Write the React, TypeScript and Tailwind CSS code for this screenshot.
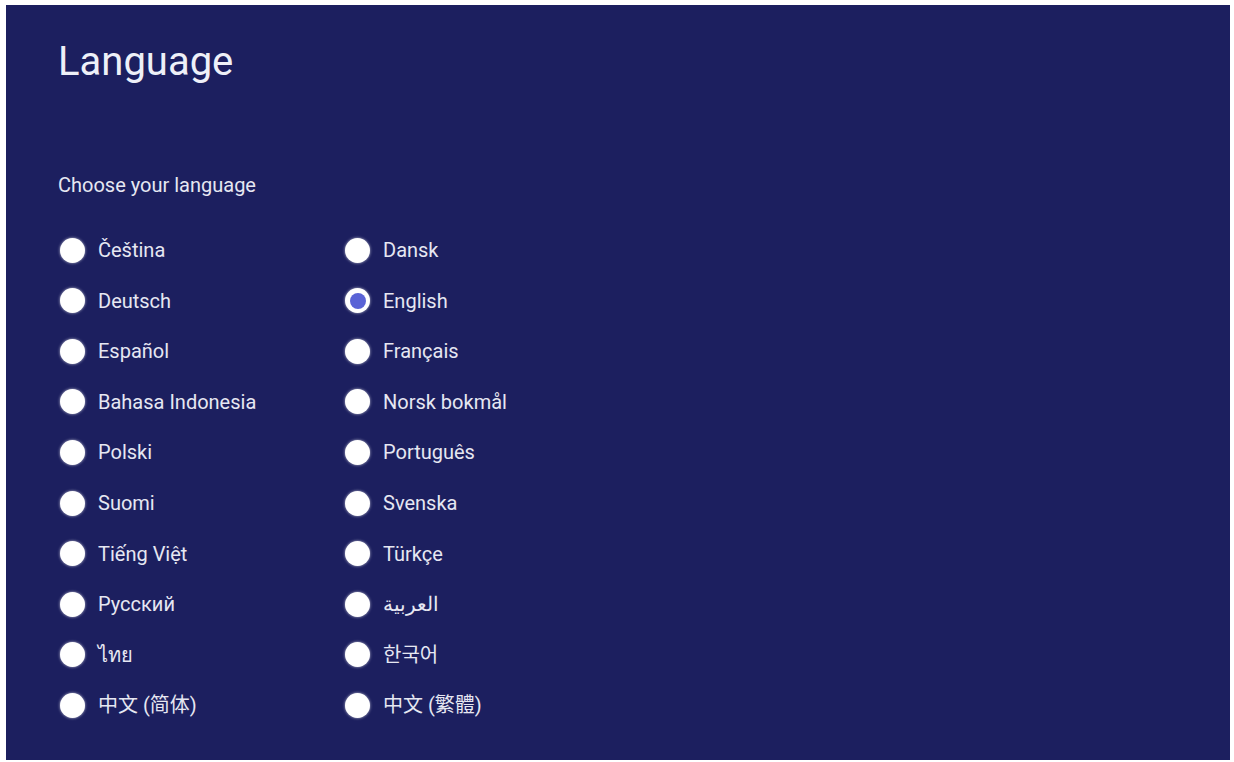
import React from "react";

const left = ["Čeština", "Deutsch", "Español", "Bahasa Indonesia", "Polski", "Suomi", "Tiếng Việt", "Русский", "ไทย", "中文 (简体)"];
const right = ["Dansk", "English", "Français", "Norsk bokmål", "Português", "Svenska", "Türkçe", "العربية", "한국어", "中文 (繁體)"];

function Radio({ selected }: { selected?: boolean }) {
  if (selected) {
    return (
      <div className="w-[25px] h-[25px] rounded-full bg-white flex items-center justify-center shadow-[0_0_3px_rgba(255,255,255,0.7)] shrink-0">
        <div className="w-[16px] h-[16px] rounded-full bg-[#5a63d6]" />
      </div>
    );
  }
  return <div className="w-[25px] h-[25px] rounded-full bg-white shadow-[0_0_3px_rgba(255,255,255,0.7)] shrink-0" />;
}

function Item({ label, selected }: { label: string; selected?: boolean }) {
  return (
    <div className="h-[50.56px] flex items-center">
      <Radio selected={selected} />
      <span className="ml-[13px] text-[20px] leading-none text-[#e6e7f2]">{label}</span>
    </div>
  );
}

export default function App() {
  return (
    <div
      className="w-[1234px] h-[762px] bg-white pl-[6px] pt-[5px]"
      style={{ fontFamily: 'Roboto, "Noto Sans", "Noto Sans CJK SC", "Noto Sans CJK KR", sans-serif' }}
    >
      <div className="w-[1224px] h-[755px] bg-[#1c1f5f] pl-[52px] pt-[37px]">
        <div className="text-[40px] leading-none text-[#eef0f8]">Language</div>
        <div className="mt-[93px] text-[20px] leading-none text-[#e6e7f2]">Choose your language</div>
        <div className="mt-[30px] flex">
          <div className="w-[287px] pl-[2px]">
            {left.map((l) => (
              <Item key={l} label={l} />
            ))}
          </div>
          <div>
            {right.map((l) => (
              <Item key={l} label={l} selected={l === "English"} />
            ))}
          </div>
        </div>
      </div>
    </div>
  );
}
